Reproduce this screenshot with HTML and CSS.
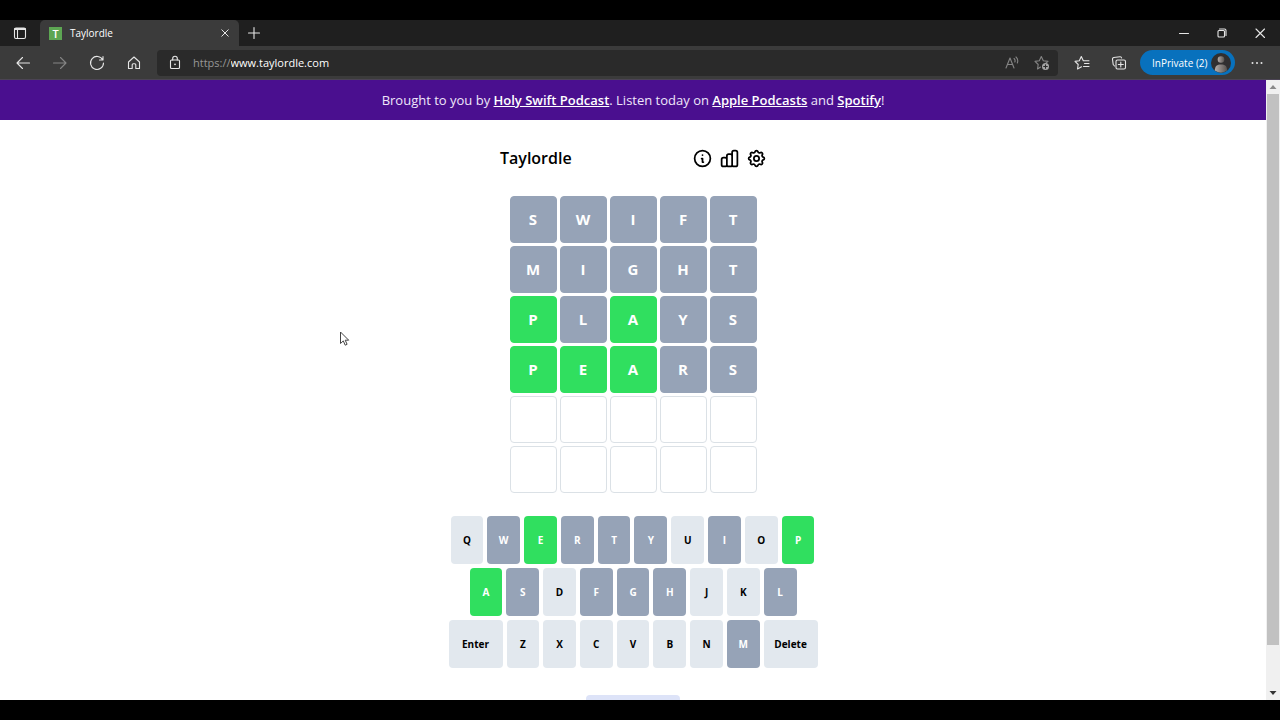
FILE: index.html
```html
<!DOCTYPE html>
<html lang="en">
<head>
<meta charset="utf-8">
<meta name="viewport" content="width=device-width, initial-scale=1">
<title>Taylordle</title>
<link rel="stylesheet" href="styles.css">
</head>
<body>
<div class="browser">
  <div class="tabstrip">
    <button class="tool workspace" aria-label="Tab actions"><svg viewBox="0 0 16 16"><rect x="2.5" y="3" width="11" height="10.500" rx="1.500"/><path d="M2.500 4.500h11M5.500 5v8.500" /><path class="thick" d="M3 4h10"/></svg></button>
    <div class="tab">
      <span class="favicon">T</span>
      <span class="tab-title">Taylordle</span>
      <button class="close" aria-label="Close tab"><svg viewBox="0 0 16 16"><path d="M4.500 4.500l7 7M11.500 4.500l-7 7"/></svg></button>
    </div>
    <button class="tool new-tab" aria-label="New tab"><svg viewBox="0 0 16 16"><path d="M8 2.500v11M2.500 8h11"/></svg></button>
    <div class="window-controls">
      <button class="tool" aria-label="Minimize"><svg viewBox="0 0 16 16"><path d="M3.500 8.500h9"/></svg></button>
      <button class="tool" aria-label="Restore"><svg viewBox="0 0 16 16"><rect x="4" y="5.500" width="6.500" height="6.500" rx="1"/><path d="M5.500 4h5a1.500 1.500 0 0 1 1.500 1.500v5"/></svg></button>
      <button class="tool" aria-label="Close"><svg viewBox="0 0 16 16"><path d="M4 4l8.500 8.500M12.500 4L4 12.500"/></svg></button>
    </div>
  </div>

  <div class="toolbar">
    <button class="tool" aria-label="Back"><svg viewBox="0 0 16 16"><path d="M14.500 8H2M7.500 2.500L2 8l5.500 5.500"/></svg></button>
    <button class="tool muted" aria-label="Forward"><svg viewBox="0 0 16 16"><path d="M1.500 8H14M8.500 2.500L14 8l-5.500 5.500"/></svg></button>
    <button class="tool" aria-label="Reload"><svg viewBox="0 0 16 16"><path d="M13.800 5A6.500 6.500 0 1 0 14.500 8M14 1.500V5h-3.500"/></svg></button>
    <button class="tool" aria-label="Home"><svg viewBox="0 0 16 16"><path d="M2.500 7L8 2l5.500 5v6.500h-3.700V9.800a1 1 0 0 0-1-1H7.200a1 1 0 0 0-1 1v3.700H2.500z"/></svg></button>
    <div class="address">
      <svg class="lock" viewBox="0 0 16 16"><rect x="3.500" y="5" width="9" height="8.500" rx="1"/><path d="M5.700 5V3.500a2.300 2.300 0 0 1 4.600 0V5"/><circle class="solid" cx="8" cy="9.300" r=".9"/></svg>
      <label for="url">https://</label><input id="url" type="text" value="www.taylordle.com" spellcheck="false">
      <button class="tool small muted" aria-label="Read aloud"><svg viewBox="0 0 16 16"><path d="M2 13L6 3l4 10M3.400 9.500h5.200M10 3.500a3 3 0 0 1 .8 3.500M12 2a5.500 5.500 0 0 1 1.300 6"/></svg></button>
      <button class="tool small muted" aria-label="Add to favorites"><svg viewBox="0 0 16 16"><path d="M6.500 12L3.500 14l.7-4.500L1 6.400l4.300-.7L7.300 1.500l2 4.200 4.700.7-2 1.600"/><circle class="badge" cx="11.500" cy="11.500" r="3.500"/><path class="cut" d="M11.500 9.700v3.600M9.700 11.500h3.600"/></svg></button>
    </div>
    <button class="tool" aria-label="Favorites"><svg viewBox="0 0 16 16"><path d="M7.500 11.800L3.500 14l.7-4.500L1 6.400l4.300-.7L7.300 1.500l2 4.200H15M10.500 8.500H15M9.500 11.500H15"/></svg></button>
    <button class="tool" aria-label="Collections"><svg viewBox="0 0 16 16"><rect x="5" y="5" width="9.500" height="9" rx="1.500"/><path d="M9.800 7v5M7.300 9.500h5M3.500 11L2.200 9.500 1.500 4.200A1.500 1.500 0 0 1 2.800 2.500L9 1.700a1.500 1.500 0 0 1 1.600 1.300"/></svg></button>
    <button class="profile">InPrivate (2)<svg viewBox="0 0 20 20"><defs><linearGradient id="skin"><stop offset="0" stop-color="#b5adaa"/><stop offset="1" stop-color="#57534f"/></linearGradient></defs><circle cx="10" cy="10" r="10" fill="#302f30"/><circle cx="10" cy="6.500" r="3.300" fill="url(#skin)"/><path d="M3.800 17.500C4 13 6 11.500 10 11.500s6 1.500 6.200 6A10 10 0 0 1 3.800 17.500z" fill="url(#skin)"/></svg></button>
    <button class="tool more" aria-label="Settings and more"><svg viewBox="0 0 16 16"><circle class="solid" cx="3.500" cy="8" r="1"/><circle class="solid" cx="8" cy="8" r="1"/><circle class="solid" cx="12.500" cy="8" r="1"/></svg></button>
  </div>

  <div class="viewport">
    <div class="page">
      <div class="banner"><p>Brought to you by <a href="#">Holy Swift Podcast</a>. Listen today on <a href="#">Apple Podcasts</a> and <a href="#">Spotify</a>!</p></div>
      <header class="game-header">
        <h1>Taylordle</h1>
        <button aria-label="Information"><svg viewBox="0 0 24 24"><path d="M13 16h-1v-4h-1m1-4h.01M21 12a9 9 0 11-18 0 9 9 0 0118 0z"/></svg></button>
        <button aria-label="Statistics"><svg viewBox="0 0 24 24"><path d="M9 19v-6a2 2 0 00-2-2H5a2 2 0 00-2 2v6a2 2 0 002 2h2a2 2 0 002-2zm0 0V9a2 2 0 012-2h2a2 2 0 012 2v10m-6 0a2 2 0 002 2h2a2 2 0 002-2m0 0V5a2 2 0 012-2h2a2 2 0 012 2v14a2 2 0 01-2 2h-2a2 2 0 01-2-2z"/></svg></button>
        <button aria-label="Settings"><svg viewBox="0 0 24 24"><path d="M10.325 4.317c.426-1.756 2.924-1.756 3.35 0a1.724 1.724 0 002.573 1.066c1.543-.94 3.31.826 2.37 2.37a1.724 1.724 0 001.065 2.572c1.756.426 1.756 2.924 0 3.35a1.724 1.724 0 00-1.066 2.573c.94 1.543-.826 3.31-2.37 2.37a1.724 1.724 0 00-2.572 1.065c-.426 1.756-2.924 1.756-3.35 0a1.724 1.724 0 00-2.573-1.066c-1.543.94-3.31-.826-2.37-2.37a1.724 1.724 0 00-1.065-2.572c-1.756-.426-1.756-2.924 0-3.35a1.724 1.724 0 001.066-2.573c-.94-1.543.826-3.31 2.37-2.37.996.608 2.296.07 2.572-1.065z"/><path d="M15 12a3 3 0 11-6 0 3 3 0 016 0z"/></svg></button>
      </header>

      <div class="grid">
        <div class="cell absent">S</div><div class="cell absent">W</div><div class="cell absent">I</div><div class="cell absent">F</div><div class="cell absent">T</div>
        <div class="cell absent">M</div><div class="cell absent">I</div><div class="cell absent">G</div><div class="cell absent">H</div><div class="cell absent">T</div>
        <div class="cell correct">P</div><div class="cell absent">L</div><div class="cell correct">A</div><div class="cell absent">Y</div><div class="cell absent">S</div>
        <div class="cell correct">P</div><div class="cell correct">E</div><div class="cell correct">A</div><div class="cell absent">R</div><div class="cell absent">S</div>
        <div class="cell"></div><div class="cell"></div><div class="cell"></div><div class="cell"></div><div class="cell"></div>
        <div class="cell"></div><div class="cell"></div><div class="cell"></div><div class="cell"></div><div class="cell"></div>
      </div>

      <div class="keyboard">
        <div class="keys top">
          <button class="key">Q</button><button class="key absent">W</button><button class="key correct">E</button><button class="key absent">R</button><button class="key absent">T</button><button class="key absent">Y</button><button class="key">U</button><button class="key absent">I</button><button class="key">O</button><button class="key correct">P</button>
        </div>
        <div class="keys middle">
          <button class="key correct">A</button><button class="key absent">S</button><button class="key">D</button><button class="key absent">F</button><button class="key absent">G</button><button class="key absent">H</button><button class="key">J</button><button class="key">K</button><button class="key absent">L</button>
        </div>
        <div class="keys">
          <button class="key wide">Enter</button><button class="key">Z</button><button class="key">X</button><button class="key">C</button><button class="key">V</button><button class="key">B</button><button class="key">N</button><button class="key absent">M</button><button class="key wide">Delete</button>
        </div>
      </div>
      <button class="about" aria-label="About"></button>
    </div>
    <div class="scrollbar">
      <svg viewBox="0 0 14 14"><path d="M3.500 9L7 5l3.500 4z" fill="#8a8a8a"/></svg>
      <div class="track"><div class="thumb"></div></div>
      <svg viewBox="0 0 14 14"><path d="M3.500 5h7L7 9z" fill="#333"/></svg>
    </div>
  </div>
</div>
<svg class="cursor" viewBox="0 0 12 16"><path d="M1.500 1v11.500l2.800-2.600 1.900 4.300 1.900-.9-1.900-4.100h3.500z"/></svg>
</body>
</html>
```
FILE: styles.css
```css
* { box-sizing: border-box; }

body {
  margin: 0;
  height: 100vh;
  padding: 20px 0;
  background: #000;
  overflow: hidden;
  font-family: "Open Sans", "Noto Sans", sans-serif;
}

button {
  padding: 0;
  border: 0;
  background: none;
  color: inherit;
  font: inherit;
}

.browser {
  display: flex;
  flex-direction: column;
  height: 100%;
  color: #fff;
}

/* Tab strip */
.tabstrip {
  display: flex;
  flex: none;
  height: 26px;
  padding-right: 1px;
  background: #1f1f1f;
}

.tool {
  display: flex;
  flex: none;
  align-items: center;
  justify-content: center;
  width: 37px;
}

.tool svg, .lock {
  width: 16px;
  height: 16px;
  fill: none;
  stroke: #e6e6e6;
  stroke-width: 1.1;
  stroke-linecap: round;
  stroke-linejoin: round;
}

.tool .thick { stroke-width: 2; }
.tool .solid, .lock .solid { fill: #e6e6e6; stroke: none; }
.tool.muted svg { stroke: #858585; }
.tool .badge { fill: #a5a5a5; stroke: none; }
.tool .cut { stroke: #2b2b2b; }

.workspace { width: 40px; }

.tab {
  display: flex;
  align-items: center;
  width: 199px;
  padding: 0 6px 0 9px;
  border-radius: 5px 5px 0 0;
  background: #3b3b3b;
}

.favicon {
  width: 13px;
  height: 13px;
  background: #5da653;
  font-size: 11px;
  font-weight: 600;
  line-height: 13px;
  text-align: center;
}

.tab-title {
  flex: 1;
  padding-left: 8px;
  font-size: 10px;
}

.close { display: flex; }
.close svg { width: 16px; height: 16px; fill: none; stroke: #e6e6e6; }
.new-tab { width: 30px; }

.window-controls {
  display: flex;
  margin-left: auto;
}

.window-controls .tool { width: 38px; }

/* Toolbar */
.toolbar {
  display: flex;
  flex: none;
  align-items: center;
  height: 34px;
  padding: 0 5px 0 4px;
  border-bottom: 1px solid #4b4454;
  background: #3b3b3b;
}

.address {
  display: flex;
  flex: 1;
  align-items: center;
  height: 26px;
  margin: 0 5px;
  padding: 0 1px 0 10px;
  border-radius: 4px;
  background: #2a2a2a;
  font-size: 11px;
}

.address label {
  padding-left: 10px;
  color: #969696;
}

.address input {
  flex: 1;
  min-width: 0;
  padding: 0;
  border: 0;
  outline: 0;
  background: none;
  color: #fff;
  font: inherit;
}

.tool.small { width: 30px; }

.profile {
  display: flex;
  align-items: center;
  justify-content: space-between;
  width: 95px;
  height: 25px;
  margin: 0 3px;
  padding: 0 4px 0 12px;
  border-radius: 13px;
  background: #0871bd;
  font-size: 10px;
  white-space: nowrap;
}

.profile svg { width: 20px; height: 20px; }

/* Page */
.viewport {
  display: flex;
  flex: 1;
  min-height: 0;
}

.page {
  flex: 1;
  overflow: hidden;
  background: #fff;
  color: #000;
}

.banner {
  padding: 10px;
  background: #4a0f8f;
  color: #efe6fa;
  font-size: 13px;
  line-height: 20px;
  text-align: center;
}

.banner p { margin: 0; }

.banner a {
  color: #fff;
  font-weight: 600;
}

.game-header {
  display: flex;
  align-items: center;
  gap: 6px;
  width: 270px;
  margin: 27px auto 0;
  padding: 0 1px 0 2px;
}

.game-header h1 {
  flex: 1;
  margin: 0;
  font-size: 16px;
  font-weight: 600;
  line-height: 22px;
}

.game-header button { display: flex; }

.game-header svg {
  width: 21px;
  height: 21px;
  fill: none;
  stroke: #000;
  stroke-width: 2;
  stroke-linecap: round;
  stroke-linejoin: round;
}

.grid {
  display: grid;
  grid-template-columns: repeat(5, 47px);
  grid-auto-rows: 47px;
  gap: 3px;
  justify-content: center;
  margin-top: 27px;
}

.cell {
  display: flex;
  align-items: center;
  justify-content: center;
  padding-bottom: 2px;
  border: 1px solid #dbe1e6;
  border-radius: 4px;
  font-size: 15px;
  font-weight: 700;
}

.keyboard {
  display: flex;
  flex-direction: column;
  gap: 4px;
  width: 369px;
  margin: 23px auto 27px;
}

.keys {
  display: flex;
  gap: 4px;
}

.keys.top { padding: 0 3px 0 2px; }
.keys.middle { padding: 0 21px; }

.key {
  flex: 1;
  height: 48px;
  border-radius: 4px;
  background: #e2e8ee;
  font-size: 10px;
  font-weight: 700;
}

.key.wide { flex: 0 0 54px; }

.cell.absent, .key.absent {
  border-color: #96a3b7;
  background: #96a3b7;
  color: #fff;
}

.cell.correct, .key.correct {
  border-color: #30df5f;
  background: #30df5f;
  color: #fff;
}

.about {
  display: block;
  width: 94px;
  height: 30px;
  margin: 0 auto;
  border-radius: 4px;
  background: #dde3f8;
}

.scrollbar {
  display: flex;
  flex-direction: column;
  width: 14px;
  background: #f0f0f0;
}

.scrollbar svg { height: 14px; }
.track { flex: 1; padding: 0 1px; }
.thumb { height: 93%; background: #c1c1c1; }

.cursor {
  position: absolute;
  top: 331px;
  left: 339px;
  width: 12px;
  height: 16px;
  fill: #fff;
  stroke: #444;
}
```
